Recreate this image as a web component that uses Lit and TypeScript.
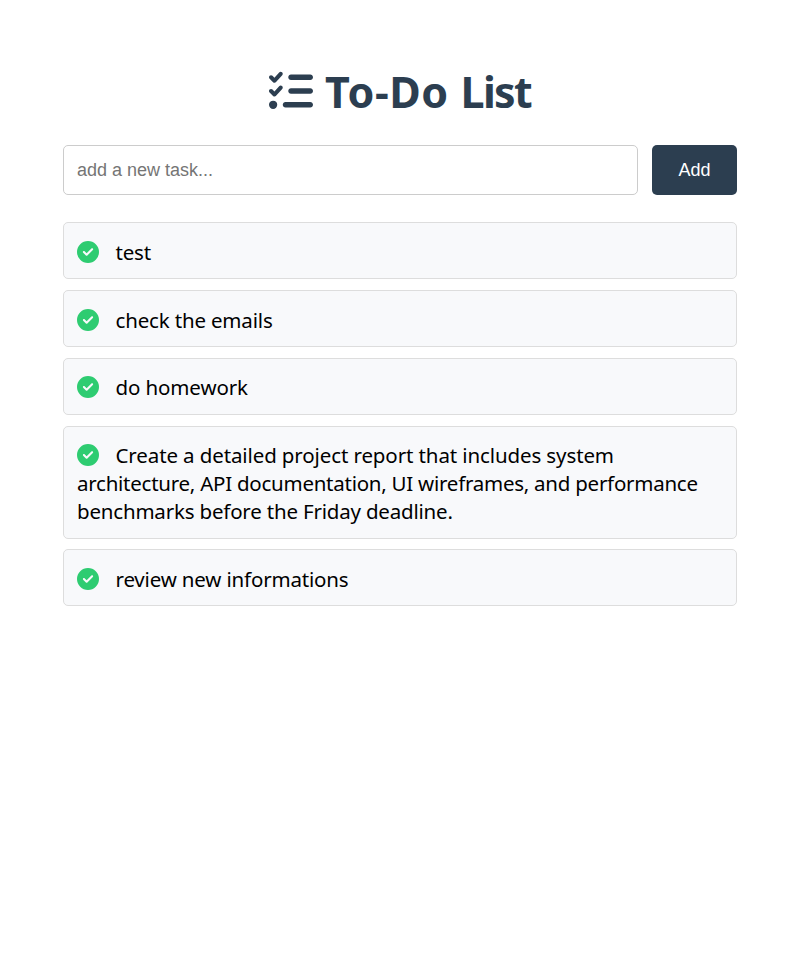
import { LitElement, html, css } from "lit";
import { customElement, state } from "lit/decorators.js";
import { classMap } from "lit/directives/class-map.js";

interface Task {
  lines: string[];
  spacing: number[];
  raised?: boolean;
}

@customElement("app-root")
export class AppRoot extends LitElement {
  static styles = css`
    :host {
      display: block;
      box-sizing: border-box;
      min-height: 967px;
      padding: 63px 65px 0 63px;
      background: #fff;
      color: #000;
      font-family: "Noto Sans", sans-serif;
    }
    .title {
      display: flex;
      align-items: center;
      height: 56px;
      margin: 0 0 26px 206px;
      color: #2c3e50;
      font-size: 43px;
      font-weight: 700;
      line-height: 56px;
      white-space: nowrap;
    }
    .title svg {
      width: 44px;
      height: 44px;
      margin-right: 12px;
      fill: currentColor;
    }
    .caption {
      padding-top: 2px;
      letter-spacing: 0.6px;
    }
    .tight {
      letter-spacing: -1.7px;
    }
    .form {
      display: flex;
      gap: 14px;
      height: 50px;
      margin-bottom: 27px;
    }
    .field,
    .add {
      box-sizing: border-box;
      margin: 0;
      font-family: "Liberation Sans", Arial, sans-serif;
      font-size: 18px;
      border-radius: 5px;
    }
    .field {
      flex: 1;
      min-width: 0;
      padding: 0 13px;
      border: 1px solid #ccc;
      outline: none;
      background: #fff;
    }
    .field::placeholder {
      color: #757575;
      opacity: 1;
    }
    .add {
      width: 85px;
      padding: 0;
      border: 0;
      background: #2c3e50;
      color: #fff;
    }
    .list {
      display: flex;
      flex-direction: column;
      gap: 11px;
      margin: 0;
      padding: 0;
      list-style: none;
    }
    .item {
      padding: 15px 13px 12px;
      border: 1px solid #ddd;
      border-radius: 5px;
      background: #f8f9fb;
      font-size: 20.5px;
      line-height: 28px;
    }
    .item.raised {
      padding: 14px 13px 13px;
    }
    .item:last-child {
      margin-top: -1px;
    }
    .line {
      display: flex;
      align-items: center;
      height: 28px;
      white-space: nowrap;
    }
    .check {
      width: 22px;
      height: 22px;
      margin-right: 16.5px;
      fill: #2ecc71;
    }
  `;

  @state() private tasks: Task[] = [
    { lines: ["test"], spacing: [-0.2] },
    { lines: ["check the emails"], spacing: [-0.17] },
    { lines: ["do homework"], spacing: [-0.12], raised: true },
    {
      lines: [
        "Create a detailed project report that includes system",
        "architecture, API documentation, UI wireframes, and performance",
        "benchmarks before the Friday deadline.",
      ],
      spacing: [-0.11, -0.25, -0.19],
      raised: true,
    },
    { lines: ["review new informations"], spacing: [-0.17] },
  ];

  private checkIcon() {
    return html`<svg class="check" viewBox="0 0 512 512" aria-hidden="true">
      <path d="M256 512A256 256 0 1 0 256 0a256 256 0 1 0 0 512zM369 209L241 337c-9.4 9.4-24.6 9.4-33.9 0l-64-64c-9.4-9.4-9.4-24.6 0-33.9s24.6-9.4 33.9 0l47 47L335 175c9.4-9.4 24.6-9.4 33.9 0s9.4 24.6 0 33.9z"></path>
    </svg>`;
  }

  render() {
    return html`
      <h1 class="title">
        <svg viewBox="0 0 512 512" aria-hidden="true">
          <path d="M152.1 38.2c9.9 8.9 10.7 24 1.8 33.9l-72 80c-4.4 4.9-10.6 7.8-17.2 7.9s-12.9-2.4-17.6-7L7 113C-2.3 103.6-2.3 88.4 7 79s24.6-9.4 33.9 0l22.1 22.1 55.1-61.2c8.9-9.9 24-10.7 33.9-1.8zm0 160c9.9 8.9 10.7 24 1.8 33.9l-72 80c-4.4 4.9-10.6 7.8-17.2 7.9s-12.9-2.4-17.6-7L7 273c-9.4-9.4-9.4-24.6 0-33.9s24.6-9.4 33.9 0l22.1 22.1 55.1-61.2c8.9-9.9 24-10.7 33.9-1.8zM224 96c0-17.7 14.3-32 32-32H480c17.7 0 32 14.3 32 32s-14.3 32-32 32H256c-17.7 0-32-14.3-32-32zm0 160c0-17.7 14.3-32 32-32H480c17.7 0 32 14.3 32 32s-14.3 32-32 32H256c-17.7 0-32-14.3-32-32zM160 416c0-17.7 14.3-32 32-32H480c17.7 0 32 14.3 32 32s-14.3 32-32 32H192c-17.7 0-32-14.3-32-32zM48 368a48 48 0 1 1 0 96 48 48 0 1 1 0-96z"></path>
        </svg>
        <span class="caption">To-Do <span class="tight">List</span></span>
      </h1>
      <div class="form">
        <input class="field" type="text" placeholder="add a new task..." />
        <button class="add">Add</button>
      </div>
      <ul class="list">
        ${this.tasks.map(
          (task) => html`<li class=${classMap({ item: true, raised: !!task.raised })}>
            ${task.lines.map(
              (line, i) => html`<div class="line">
                ${i === 0 ? this.checkIcon() : null}
                <span style="letter-spacing: ${task.spacing[i]}px">${line}</span>
              </div>`
            )}
          </li>`
        )}
      </ul>
    `;
  }
}
